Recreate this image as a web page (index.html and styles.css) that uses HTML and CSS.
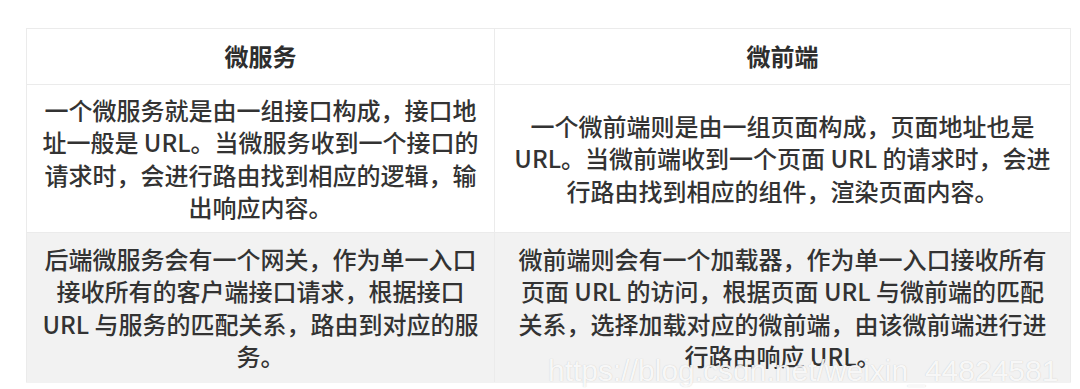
FILE: index.html
```html
<!DOCTYPE html>
<html lang="zh-CN">
<head>
<meta charset="utf-8">
<title>微服务 vs 微前端</title>
<link rel="stylesheet" href="styles.css">
</head>
<body>
<div class="page">
  <table class="cmp">
    <colgroup>
      <col class="c1">
      <col class="c2">
    </colgroup>
    <thead>
      <tr class="head">
        <th>微服务</th>
        <th>微前端</th>
      </tr>
    </thead>
    <tbody>
      <tr class="r1">
        <td>一个微服务就是由一组接口构成，接口地<br>址一般是 URL。当微服务收到一个接口的<br>请求时，会进行路由找到相应的逻辑，输<br>出响应内容。</td>
        <td>一个微前端则是由一组页面构成，页面地址也是<br>URL。当微前端收到一个页面 URL 的请求时，会进<br>行路由找到相应的组件，渲染页面内容。</td>
      </tr>
      <tr class="r2">
        <td>后端微服务会有一个网关，作为单一入口<br>接收所有的客户端接口请求，根据接口<br>URL 与服务的匹配关系，路由到对应的服<br>务。</td>
        <td>微前端则会有一个加载器，作为单一入口接收所有<br>页面 URL 的访问，根据页面 URL 与微前端的匹配<br>关系，选择加载对应的微前端，由该微前端进行进<br>行路由响应 URL。</td>
      </tr>
    </tbody>
  </table>
  <div class="watermark">https://blog.csdn.net/weixin_44824581</div>
</div>
</body>
</html>
```

FILE: styles.css
```css
html, body {
  margin: 0;
  padding: 0;
  background: #ffffff;
  overflow: hidden;
}

.page {
  position: relative;
  width: 1080px;
  height: 389px;
  padding: 28px 0 0 26px;
  box-sizing: border-box;
  font-family: "Noto Sans CJK SC", "Noto Sans", sans-serif;
  color: #333333;
}

.cmp {
  border-collapse: collapse;
  table-layout: fixed;
  width: 1044px;
}

.c1 { width: 468px; }
.c2 { width: 576px; }

.cmp th,
.cmp td {
  border: 1px solid #ebebeb;
  text-align: center;
  vertical-align: middle;
  font-size: 24px;
  font-weight: 500;
  line-height: 32.5px;
  padding: 0 8px;
  white-space: nowrap;
}

.cmp th {
  font-weight: 700;
  color: #2e2e2e;
}

.head { height: 56px; }
.r1 { height: 148px; background: #ffffff; }
.r2 { height: 150px; background: #f2f2f2; }

.r2 td { border-bottom-color: #f2f2f2; }

.watermark {
  position: absolute;
  left: 548px;
  top: 353px;
  font-family: "Liberation Sans", Arial, sans-serif;
  font-size: 30px;
  line-height: 36px;
  white-space: nowrap;
  color: rgba(255, 255, 255, 0.9);
  text-shadow: 0 0 1px rgba(120, 120, 120, 0.4);
}
```
